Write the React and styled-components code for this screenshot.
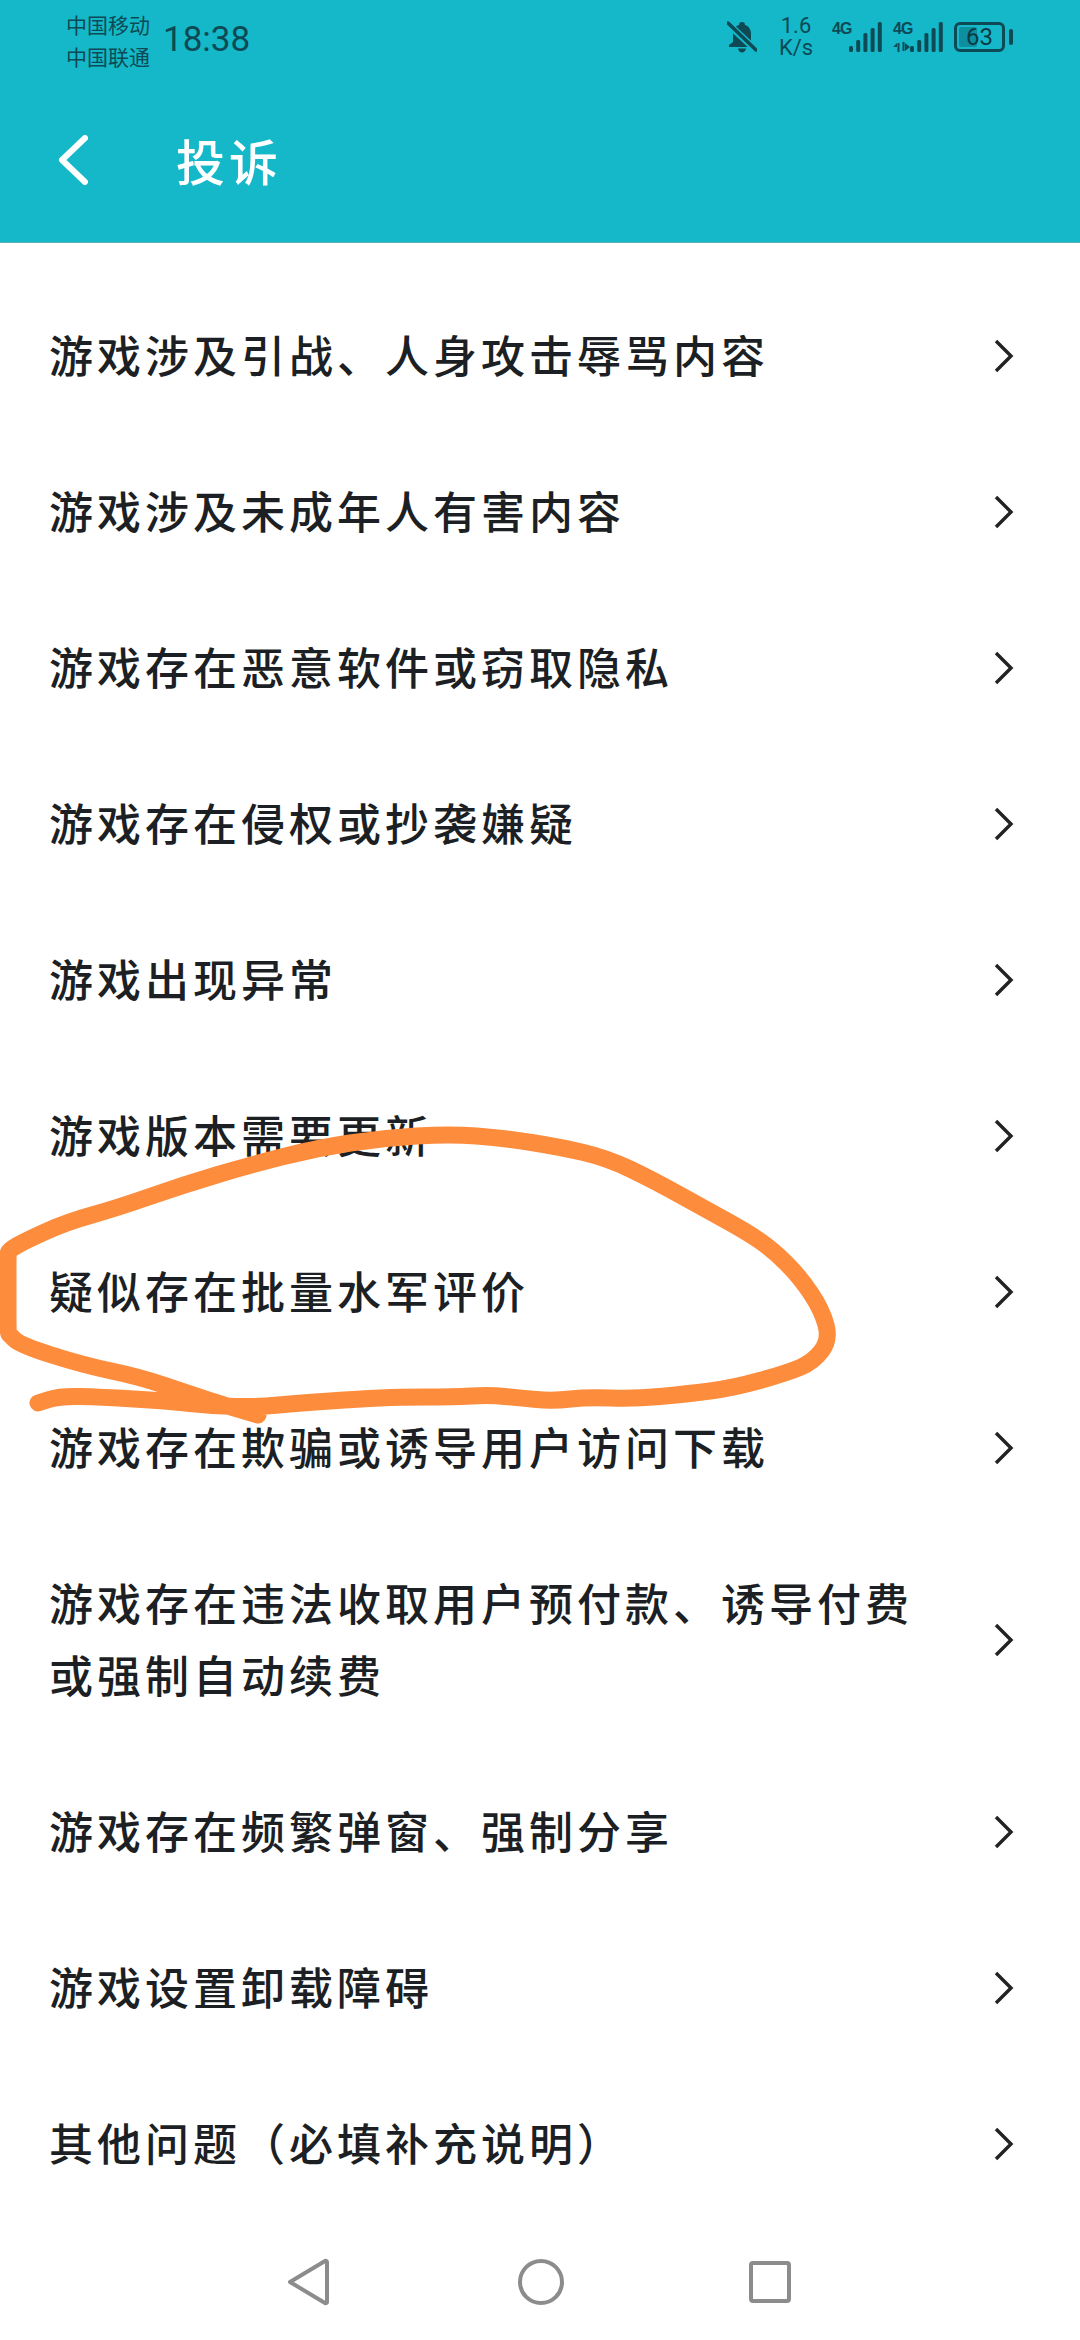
import styled, { createGlobalStyle } from "styled-components";

const rows = [
    ["游戏涉及引战、人身攻击辱骂内容"],
    ["游戏涉及未成年人有害内容"],
    ["游戏存在恶意软件或窃取隐私"],
    ["游戏存在侵权或抄袭嫌疑"],
    ["游戏出现异常"],
    ["游戏版本需要更新"],
    ["疑似存在批量水军评价"],
    ["游戏存在欺骗或诱导用户访问下载"],
    ["游戏存在违法收取用户预付款、诱导付费", "或强制自动续费"],
    ["游戏存在频繁弹窗、强制分享"],
    ["游戏设置卸载障碍"],
    ["其他问题（必填补充说明）"],
];

// hand drawn circle over the list, centre line of the stroke
const scribble = [
    [258, 1415], [233, 1408], [187, 1393], [140, 1377], [83, 1365], [20, 1345], [9, 1334], [8, 1333], [8, 1290], [8, 1254], [9, 1250], [27, 1240],
    [67, 1222], [117, 1208], [183, 1185], [250, 1165], [317, 1148], [383, 1138], [450, 1134], [503, 1138],
    [560, 1147], [607, 1158], [653, 1180], [707, 1210], [747, 1232], [773, 1250], [800, 1277], [822, 1310],
    [830, 1340], [813, 1362], [787, 1373], [733, 1388], [687, 1394], [633, 1399], [588, 1397], [553, 1401],
    [520, 1398], [490, 1395], [453, 1397], [400, 1397], [360, 1399], [300, 1403], [257, 1407], [213, 1406],
    [167, 1401], [100, 1397], [60, 1396], [38, 1403],
];

const smoothPath = (pts) => {
    let d = `M${pts[0][0]} ${pts[0][1]}`;
    for (let i = 1; i < pts.length - 1; i++) {
        const mx = (pts[i][0] + pts[i + 1][0]) / 2;
        const my = (pts[i][1] + pts[i + 1][1]) / 2;
        d += ` Q${pts[i][0]} ${pts[i][1]} ${mx} ${my}`;
    }
    const last = pts[pts.length - 1];
    return `${d} L${last[0]} ${last[1]}`;
};

const Bars = () => {
    const heights = [6, 12, 19, 24, 30];
    return (
        <svg width="33" height="30" viewBox="0 0 33 30">
            {heights.map((h, i) => (
                <rect key={i} x={i * 7.2} y={30 - h} width="4" height={h} rx="1.5" fill="#0d4a55" />
            ))}
        </svg>
    );
};

const App = () => {
    return (
        <Page>
            <GlobalStyle />
            <Header>
                <StatusBar>
                    <Carrier>
                        <span>中国移动</span>
                        <span>中国联通</span>
                    </Carrier>
                    <Clock>18:38</Clock>
                    <StatusRight>
                        <svg width="30" height="32" viewBox="0 0 30 32">
                            <path d="M15 1c2 0 3 1 3 3 4 1 6 5 6 9v8l4 3v2H2v-2l4-3v-8c0-4 2-8 6-9 0-2 1-3 3-3z" fill="#0d4a55" />
                            <path d="M11 27.500h8c0 2-2 4-4 4s-4-2-4-4z" fill="#0d4a55" />
                            <path d="M-1 1l30 28" stroke="#14b8c9" strokeWidth="7" />
                            <path d="M1 2l28 27" stroke="#0d4a55" strokeWidth="3.5" strokeLinecap="round" />
                        </svg>
                        <Speed>
                            <span>1.6</span>
                            <span>K/s</span>
                        </Speed>
                        <Signal>
                            <NetLabel>4G</NetLabel>
                            <Bars />
                        </Signal>
                        <Signal>
                            <NetLabel>4G</NetLabel>
                            <Arrows>
                                <svg width="17" height="10" viewBox="0 0 17 10">
                                    <path d="M0 5l4-4v4zM4.500 1h2v9h-2zM9.500 0h2v9h-2zM12 1l5 4-5 4z" fill="#0d4a55" />
                                </svg>
                            </Arrows>
                            <Bars />
                        </Signal>
                        <Battery>
                            <BatteryFill style={{ width: `${63 * 0.62}%` }} />
                            <BatteryText>63</BatteryText>
                        </Battery>
                    </StatusRight>
                </StatusBar>
                <Toolbar>
                    <svg width="30" height="50" viewBox="0 0 30 50">
                        <path d="M27 3L4 25l23 22" fill="none" stroke="#fff" strokeWidth="6" strokeLinecap="round" strokeLinejoin="round" />
                    </svg>
                    <Title>投诉</Title>
                </Toolbar>
            </Header>
            <List>
                {rows.map((lines) => (
                    <Row key={lines[0]}>
                        <RowText>
                            {lines.map((line) => (
                                <div key={line}>{line}</div>
                            ))}
                        </RowText>
                        <svg width="20" height="34" viewBox="0 0 20 34">
                            <path d="M2 2l15 15L2 32" fill="none" stroke="#222" strokeWidth="3.4" />
                        </svg>
                    </Row>
                ))}
            </List>
            <NavBar>
                <svg width="44" height="48" viewBox="0 0 44 48">
                    <path d="M39 3L4 24l35 21c1 .6 2 0 2-1V4c0-1-1-1.600-2-1z" fill="none" stroke="#8c8c8c" strokeWidth="4" strokeLinejoin="round" />
                </svg>
                <svg width="48" height="48" viewBox="0 0 48 48">
                    <circle cx="24" cy="24" r="21" fill="none" stroke="#8c8c8c" strokeWidth="4" />
                </svg>
                <svg width="42" height="42" viewBox="0 0 42 42">
                    <rect x="2" y="2" width="38" height="38" rx="2" fill="none" stroke="#8c8c8c" strokeWidth="4" />
                </svg>
            </NavBar>
            <Scribble viewBox="0 0 1080 2340">
                <path d={smoothPath(scribble)} fill="none" stroke="#fd8c3c" strokeWidth="17" strokeLinecap="round" strokeLinejoin="round" />
            </Scribble>
        </Page>
    );
};

const GlobalStyle = createGlobalStyle`
    body {
        margin: 0;
        background: #fff;
        font-family: "Noto Sans CJK SC", "Noto Sans", sans-serif;
    }
`

const Page = styled.div`
    position: relative;
    width: 1080px;
    height: 2340px;
    display: flex;
    flex-direction: column;
    overflow: hidden;
    background: #fff;
`

const Header = styled.div`
    background: #14b8c9;
    height: 243px;
    box-sizing: border-box;
    border-bottom: 1px solid #5fb0b8;
    flex-shrink: 0;
`

const StatusBar = styled.div`
    height: 80px;
    display: flex;
    align-items: center;
    padding: 0 67px 0 66px;
    color: #0d4a55;
`

const Carrier = styled.div`
    display: flex;
    flex-direction: column;
    font-size: 21px;
    line-height: 32px;
    width: 97px;
`

const Clock = styled.div`
    font-family: Roboto, sans-serif;
    font-weight: 400;
    font-size: 35px;
    line-height: 40px;
`

const StatusRight = styled.div`
    margin-left: auto;
    margin-bottom: 6px;
    display: flex;
    align-items: center;
    gap: 11px;
`

const Speed = styled.div`
    display: flex;
    flex-direction: column;
    align-items: center;
    font-family: Roboto, sans-serif;
    font-size: 22px;
    line-height: 22px;
    width: 34px;
    margin: 0 8px 0 11px;
`

const Signal = styled.div`
    position: relative;
    width: 50px;
    height: 30px;
    display: flex;
    justify-content: flex-end;
`

const NetLabel = styled.span`
    position: absolute;
    left: 0;
    top: -1px;
    font-family: "Liberation Sans", sans-serif;
    font-weight: 700;
    font-size: 16px;
    line-height: 16px;
    letter-spacing: -1px;
`

const Arrows = styled.span`
    position: absolute;
    left: 0;
    bottom: 0;
    line-height: 0;
`

const Battery = styled.div`
    position: relative;
    width: 51px;
    height: 30px;
    box-sizing: border-box;
    border: 3px solid #0d4a55;
    border-radius: 6px;
    margin-right: 8px;
    &::after {
        content: "";
        position: absolute;
        right: -11px;
        top: 4px;
        width: 4px;
        height: 16px;
        border-radius: 2px;
        background: #0d4a55;
    }
`

const BatteryFill = styled.div`
    position: absolute;
    left: 2px;
    top: 2px;
    bottom: 2px;
    background: #0e8f9f;
    border-radius: 2px;
`

const BatteryText = styled.div`
    position: relative;
    text-align: center;
    font-family: Roboto, sans-serif;
    font-size: 24px;
    line-height: 24px;
    color: #0d3a42;
`

const Toolbar = styled.div`
    height: 159px;
    display: flex;
    align-items: center;
    padding-left: 58px;
    gap: 88px;
`

const Title = styled.div`
    color: #fff;
    font-size: 49px;
    line-height: 56px;
    letter-spacing: 4px;
    font-weight: 500;
`

const List = styled.div`
    flex: 1;
    padding-top: 35px;
`

const Row = styled.div`
    display: flex;
    align-items: center;
    justify-content: space-between;
    padding: 42px 66px 42px 49px;
    color: #1c1f23;
`

const RowText = styled.div`
    font-size: 44px;
    font-weight: 500;
    line-height: 72px;
    letter-spacing: 4px;
    margin-top: -2px;
    padding-bottom: 2px;
`

const NavBar = styled.div`
    height: 119px;
    flex-shrink: 0;
    display: flex;
    align-items: center;
    padding-left: 286px;
    & > svg:nth-child(2) { margin-left: 187px; }
    & > svg:nth-child(3) { margin-left: 184px; }
`

const Scribble = styled.svg`
    position: absolute;
    left: 0;
    top: 0;
    width: 1080px;
    height: 2340px;
    pointer-events: none;
`

export default App;
